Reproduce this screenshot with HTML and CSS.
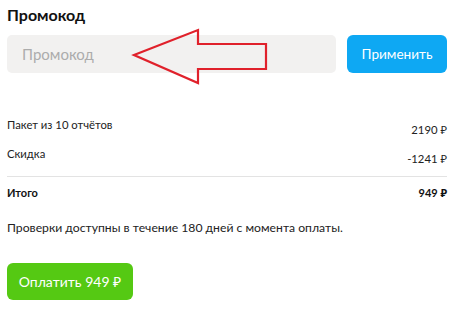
FILE: index.html
```html
<!DOCTYPE html>
<html lang="ru">
<head>
<meta charset="utf-8">
<link rel="stylesheet" href="styles.css">
</head>
<body>
<div class="page">
  <h2 class="title">Промокод</h2>
  <div class="promo">
    <div class="field">
      <input class="input" type="text" placeholder="Промокод">
      <svg class="arrow" width="140" height="60" viewBox="0 0 140 60">
        <polygon points="2,26 66,1 66,15 134,15 134,40 66,40 66,54" fill="none" stroke="#e0212b" stroke-width="2.2" stroke-linejoin="miter"/>
      </svg>
    </div>
    <button class="apply">Применить</button>
  </div>
  <div class="summary">
    <div class="row first"><span class="label">Пакет из 10 отчётов</span><span class="value">2190 ₽</span></div>
    <div class="row"><span class="label">Скидка</span><span class="value">-1241 ₽</span></div>
    <div class="row total"><span class="label">Итого</span><span class="value">949 ₽</span></div>
  </div>
  <p class="note">Проверки доступны в течение 180 дней с момента оплаты.</p>
  <button class="pay">Оплатить 949 ₽</button>
</div>
</body>
</html>
```
FILE: styles.css
```css
* { box-sizing: border-box; }
html, body { margin: 0; padding: 0; background: #fff; }
body { font-family: Lato, "Noto Sans", sans-serif; color: #222; }
.page { padding: 5px 8px 0 7px; width: 455px; }
.title { margin: 0; font-size: 16px; font-weight: 700; color: #111; line-height: 20px; height: 30px; }
.promo { display: flex; gap: 11px; height: 38px; }
.field { position: relative; flex: 0 0 329px; }
.input { width: 100%; height: 100%; border: 0; border-radius: 5px; background: #f2f1f0; padding: 0 15px; font-family: inherit; font-size: 15px; outline: none; }
.input::placeholder { color: #acacac; }
.arrow { position: absolute; left: 125px; top: -6px; overflow: visible; }
.apply { flex: 0 0 100px; border: 0; border-radius: 6px; background: #0ea8f3; color: #fff; font-family: inherit; font-size: 13.6px; padding: 0; }
.summary { margin-top: 44px; width: 440px; }
.row { display: flex; justify-content: space-between; align-items: flex-start; font-size: 11.3px; height: 30px; color: #222; }
.row.first { height: 29px; }
.row .label { line-height: 16px; }
.row .value { line-height: 16px; padding-top: 5px; }
.row.total { border-top: 1px solid #e3e3e3; height: auto; padding-top: 8px; font-weight: 700; font-size: 11px; color: #111; }
.row.total .value { padding-top: 0; }
.note { margin: 19px 0 0; font-size: 12.2px; line-height: 16px; color: #222; }
.pay { margin-top: 27px; width: 126px; height: 37px; border: 0; border-radius: 6px; background: #55c913; color: #fff; font-family: inherit; font-size: 14px; padding: 0; }
```
